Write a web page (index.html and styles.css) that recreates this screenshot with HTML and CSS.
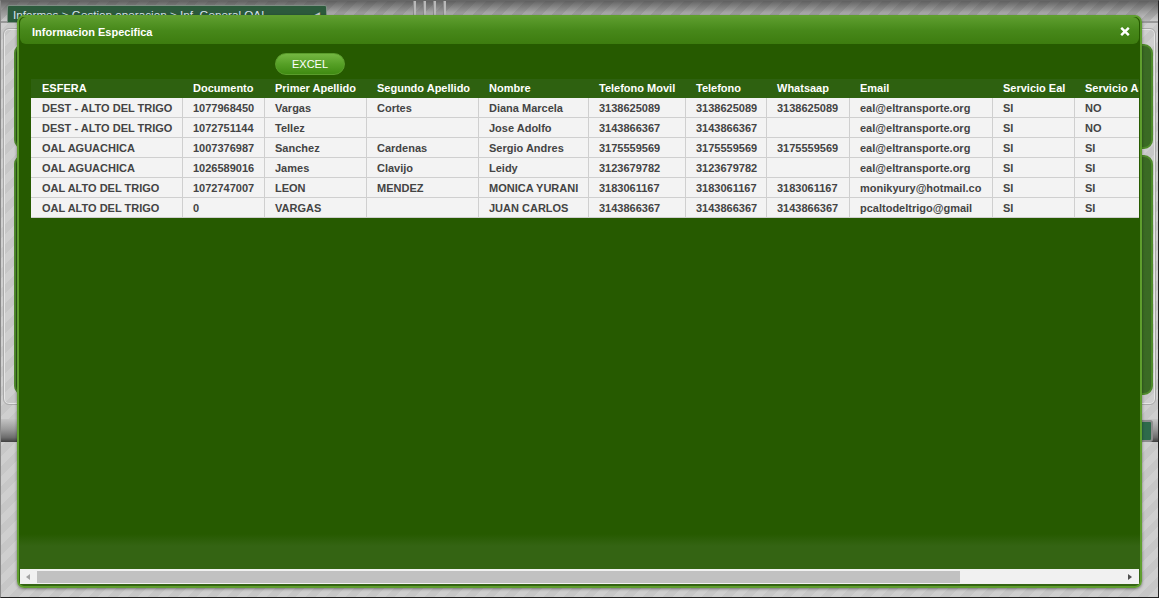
FILE: index.html
```html
<!DOCTYPE html>
<html lang="es">
<head>
<meta charset="utf-8">
<title>Informacion Especifica</title>
<link rel="stylesheet" href="styles.css">
</head>
<body>
<div class="page">
  <div class="topbar">
    <div class="crumb"><span class="crumb-text">Informes &gt; Gestion operacion &gt; Inf. General OAL</span><span class="crumb-tri">&#9664;</span></div>
    <div class="grip"><i></i><i></i><i></i><i></i></div>
  </div>
  <div class="panel">
    <div class="gbox gbox-top"></div>
    <div class="gbox gbox-main"></div>
  </div>
  <div class="graybar"><span class="tealbtn"></span></div>
</div>

<div class="dialog">
  <div class="titlebar">
    <span class="title">Informacion Especifica</span>
    <svg class="close" width="10" height="9" viewBox="0 0 10 9"><path d="M1.2 0.8 L8.8 8.2 M8.8 0.8 L1.2 8.2" stroke="#fff" stroke-width="2.4" fill="none"/></svg>
  </div>
  <div class="scroller">
    <div class="toolbar"><button class="excel">EXCEL</button></div>
    <table class="grid">
      <thead>
        <tr>
          <th class="c1">ESFERA</th>
          <th class="c2">Documento</th>
          <th class="c3">Primer Apellido</th>
          <th class="c4">Segundo Apellido</th>
          <th class="c5">Nombre</th>
          <th class="c6">Telefono Movil</th>
          <th class="c7">Telefono</th>
          <th class="c8">Whatsaap</th>
          <th class="c9">Email</th>
          <th class="c10">Servicio Eal</th>
          <th class="c11">Servicio Asesoria</th>
        </tr>
      </thead>
      <tbody>
        <tr><td>DEST - ALTO DEL TRIGO</td><td>1077968450</td><td>Vargas</td><td>Cortes</td><td>Diana Marcela</td><td>3138625089</td><td>3138625089</td><td>3138625089</td><td>eal@eltransporte.org</td><td>SI</td><td>NO</td></tr>
        <tr><td>DEST - ALTO DEL TRIGO</td><td>1072751144</td><td>Tellez</td><td></td><td>Jose Adolfo</td><td>3143866367</td><td>3143866367</td><td></td><td>eal@eltransporte.org</td><td>SI</td><td>NO</td></tr>
        <tr><td>OAL AGUACHICA</td><td>1007376987</td><td>Sanchez</td><td>Cardenas</td><td>Sergio Andres</td><td>3175559569</td><td>3175559569</td><td>3175559569</td><td>eal@eltransporte.org</td><td>SI</td><td>SI</td></tr>
        <tr><td>OAL AGUACHICA</td><td>1026589016</td><td>James</td><td>Clavijo</td><td>Leidy</td><td>3123679782</td><td>3123679782</td><td></td><td>eal@eltransporte.org</td><td>SI</td><td>SI</td></tr>
        <tr><td>OAL ALTO DEL TRIGO</td><td>1072747007</td><td>LEON</td><td>MENDEZ</td><td>MONICA YURANI</td><td>3183061167</td><td>3183061167</td><td>3183061167</td><td>monikyury@hotmail.co</td><td>SI</td><td>SI</td></tr>
        <tr><td>OAL ALTO DEL TRIGO</td><td>0</td><td>VARGAS</td><td></td><td>JUAN CARLOS</td><td>3143866367</td><td>3143866367</td><td>3143866367</td><td>pcaltodeltrigo@gmail</td><td>SI</td><td>SI</td></tr>
      </tbody>
    </table>
  </div>
  <div class="hscroll">
    <span class="arrow arrow-left"></span>
    <div class="track"><div class="thumb"></div></div>
    <span class="arrow arrow-right"></span>
  </div>
</div>
</body>
</html>
```

FILE: styles.css
```css
html, body {
  margin: 0;
  padding: 0;
  background: #fff;
}
body {
  font-family: "Liberation Sans", Arial, sans-serif;
  width: 1160px;
  height: 599px;
  overflow: hidden;
  position: relative;
}

/* ---------- background page ---------- */
.page {
  width: 1159px;
  height: 598px;
  box-sizing: border-box;
  border: 1px solid #222;
  border-left-color: #8a8a8a;
  border-top-color: #666;
  background: repeating-linear-gradient(135deg, #cfcfcf 0 7px, #c7c7c7 7px 14px);
  overflow: hidden;
}
.topbar {
  height: 22px;
  box-sizing: border-box;
  padding: 4px 0 0 6px;
  display: flex;
  align-items: flex-start;
  border-bottom: 2px solid #999;
  background:
    linear-gradient(rgba(80,80,80,.85), rgba(120,120,120,.55) 55%, rgba(175,175,175,.25)),
    repeating-linear-gradient(135deg, #d4d4d4 0 7px, #b9b9b9 7px 14px);
}
.crumb {
  width: 320px;
  height: 18px;
  box-sizing: border-box;
  border: 1px solid #7e8e84;
  border-radius: 2px 2px 0 0;
  background: #2c5a3c;
  color: #d9e4ee;
  font-size: 11.7px;
  line-height: 16px;
  padding: 1px 6px 0 5px;
  display: flex;
  justify-content: space-between;
  white-space: nowrap;
}
.crumb-tri {
  color: #c8c8c8;
  font-size: 9px;
}
.grip {
  margin-left: 86px;
  margin-top: -4px;
  display: flex;
  gap: 7px;
}
.grip i {
  width: 2px;
  height: 14px;
  background: #b8b8b8;
  border-left: 1px solid #8c8c8c;
}
.panel {
  margin: 5px 2px 0 2px;
  height: 377px;
  box-sizing: border-box;
  border: 1px solid #a9a9a9;
  border-radius: 6px;
  box-shadow: inset 0 0 0 1px #e6e6e6;
  padding: 15px 2px 9px 10px;
  display: flex;
  flex-direction: column;
  gap: 6px;
}
.gbox {
  border: 2px solid #4f8a2b;
  border-radius: 9px;
  background: linear-gradient(90deg, #2e5b19, #3a6a24);
}
.gbox-top { height: 105px; box-sizing: border-box; }
.gbox-main { flex: 1; }
.graybar {
  margin-top: 14px;
  height: 23px;
  background: linear-gradient(#c4c4c4, #9a9a9a 45%, #6d6d6d 80%, #3f3f3f);
  display: flex;
  justify-content: flex-end;
  align-items: center;
  padding-right: 5px;
}
.tealbtn {
  width: 12px;
  height: 18px;
  border: 2px solid #8d8d8d;
  border-radius: 3px;
  background: #2e6a4b;
}

/* ---------- dialog ---------- */
.dialog {
  position: absolute;
  left: 17px;
  top: 15px;
  width: 1125px;
  height: 573px;
  box-sizing: border-box;
  border: 2px solid #5f9e2e;
  border-radius: 7px;
  padding: 0 1px 2px 1px;
  background: linear-gradient(to top, #346413 0, #346413 40px, #265a00 52px);
  box-shadow: 0 1px 3px rgba(0,0,0,.45);
  display: flex;
  flex-direction: column;
  overflow: hidden;
}
.titlebar {
  height: 27px;
  flex: none;
  box-sizing: border-box;
  border-radius: 6px;
  background: linear-gradient(#5d9d2e, #47881a 50%, #3d7c0f);
  display: flex;
  justify-content: space-between;
  align-items: flex-start;
  padding: 0 9px 0 12px;
}
.title {
  color: #fff;
  font-weight: bold;
  font-size: 11px;
  line-height: 24px;
  margin-top: 3px;
  white-space: nowrap;
}
.close {
  margin-top: 10px;
  display: block;
}
.scroller {
  flex: 1;
  overflow: hidden;
  min-height: 0;
}
.toolbar {
  padding: 9px 0 4px 255px;
}
.excel {
  display: block;
  width: 70px;
  height: 22px;
  padding: 0;
  border: 1px solid #5a9d2c;
  border-radius: 11px;
  background: linear-gradient(#74b742, #56a026 50%, #3f8b12);
  color: #fff;
  font-family: "Liberation Sans", Arial, sans-serif;
  font-size: 11px;
  line-height: 20px;
  text-align: center;
  cursor: pointer;
}
.grid {
  margin-left: 11px;
  width: 1169px;
  table-layout: fixed;
  border-collapse: separate;
  border-spacing: 0;
  font-size: 11px;
  font-weight: bold;
  white-space: nowrap;
}
.grid th {
  box-sizing: border-box;
  height: 19px;
  line-height: 19px;
  padding: 0 0 0 10px;
  text-align: left;
  color: #fff;
  background: #2e6110;
  font-weight: bold;
  overflow: hidden;
}
.grid th.c1 { padding-left: 11px; width: 152px; }
.grid th.c2 { width: 82px; }
.grid th.c3 { width: 102px; }
.grid th.c4 { width: 112px; }
.grid th.c5 { width: 110px; }
.grid th.c6 { width: 97px; }
.grid th.c7 { width: 81px; }
.grid th.c8 { width: 83px; }
.grid th.c9 { width: 143px; }
.grid th.c10 { width: 82px; }
.grid th.c11 { width: 125px; }
.grid td {
  line-height: 18px;
  padding: 1px 0 0 10px;
  color: #444;
  background: #f3f3f3;
  border-right: 1px solid #cfcfcf;
  border-bottom: 1px solid #cfcfcf;
  overflow: hidden;
}
.grid td:first-child { padding-left: 11px; }

/* fake horizontal scrollbar */
.hscroll {
  flex: none;
  height: 15px;
  background: #f1f1f1;
  display: flex;
  align-items: center;
}
.arrow {
  width: 0;
  height: 0;
  border-top: 3.5px solid transparent;
  border-bottom: 3.5px solid transparent;
  flex: none;
}
.arrow-left {
  border-right: 4px solid #a3a3a3;
  margin: 1px 7px 0 6px;
}
.arrow-right {
  border-left: 4px solid #505050;
  margin: 1px 7px 0 6px;
}
.track {
  flex: 1;
  height: 12px;
  margin-top: 1px;
  margin-left: 0;
}
.thumb {
  width: 923px;
  height: 12px;
  background: #c1c1c1;
}
```
